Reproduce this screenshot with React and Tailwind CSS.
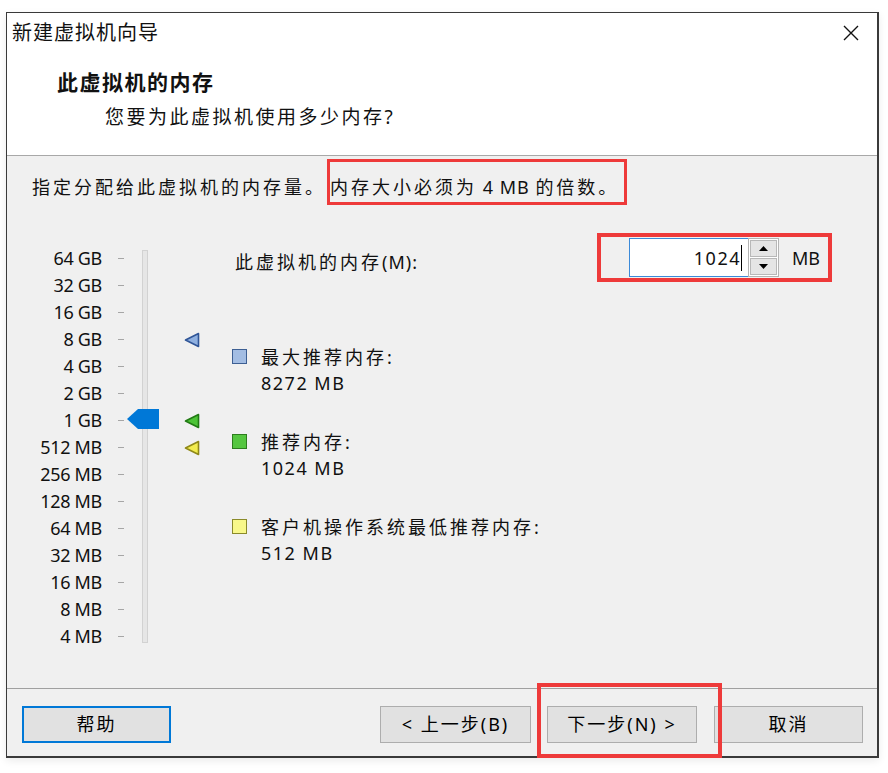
const scale = [
  "64 GB", "32 GB", "16 GB", "8 GB", "4 GB", "2 GB", "1 GB",
  "512 MB", "256 MB", "128 MB", "64 MB", "32 MB", "16 MB", "8 MB", "4 MB",
];

// markers next to the slider, keyed by row index
const markers = {
  3: { fill: "#8fb0e0", stroke: "#2f5597" },
  6: { fill: "#4cc436", stroke: "#217a14" },
  7: { fill: "#f2ec4e", stroke: "#8f8818" },
};

function Marker({ fill, stroke }) {
  return (
    <svg width="16" height="16" viewBox="0 0 16 16">
      <polygon points="1.5,8 14.5,1.5 14.5,14.5" fill={fill} stroke={stroke} strokeWidth="1.6" strokeLinejoin="round" />
    </svg>
  );
}

function LegendItem({ box, title, value }) {
  return (
    <div className="flex items-start">
      <div className={`mt-[5px] w-[15px] h-[15px] border ${box}`} />
      <div className="ml-[14px]">
        <div className="leading-[26px] tracking-[3px]">{title}</div>
        <div className="leading-[26px] tracking-[1.5px]">{value}</div>
      </div>
    </div>
  );
}

function Button({ children, className = "" }) {
  return (
    <button className={`h-[37px] bg-[#e1e1e1] flex items-center justify-center text-[18px] tracking-[2px] text-black ${className}`}>
      {children}
    </button>
  );
}

export default function App() {
  return (
    <div className="w-[888px] h-[773px] bg-white pt-[12px] pl-[6px] font-[family-name:'Noto_Sans','Noto_Sans_CJK_SC',sans-serif] text-[18px] text-[#111]">
      <div className="w-[873px] h-[746px] border-l border-t border-r-2 border-b-2 border-[#3a3a3a] flex flex-col shadow-[0_3px_8px_rgba(0,0,0,0.08)]">
        {/* header */}
        <div className="h-[143px] bg-white border-b border-[#a8a8a8]">
          <div className="h-[40px] flex items-center pl-[5px] pr-[18px]">
            <span className="text-[20px] tracking-[1px]">新建虚拟机向导</span>
            <svg className="ml-auto" width="16" height="16" viewBox="0 0 16 16">
              <path d="M1 1 L15 15 M15 1 L1 15" stroke="#111" strokeWidth="1.4" />
            </svg>
          </div>
          <div className="pl-[50px] mt-[15px] text-[21px] font-bold leading-[28px] tracking-[1.5px]">此虚拟机的内存</div>
          <div className="pl-[98px] mt-[8px] text-[19px] leading-[26px] tracking-[2.5px]">您要为此虚拟机使用多少内存?</div>
        </div>

        {/* body */}
        <div className="flex-1 bg-[#f0f0f0] flex flex-col">
          <div className="flex items-start pt-[3px] pl-[25px] tracking-[3px]">
            <span className="mt-[17px] leading-[22px]">指定分配给此虚拟机的内存量。</span>
            <span className="ml-[1px] w-[300px] h-[46px] border-[3px] border-[#ee3a3a] pt-[14px] leading-[22px] whitespace-nowrap">
              内存大小必须为<span className="tracking-[1px]"> 4 MB </span>的倍数。
            </span>
          </div>

          <div className="flex-1 flex">
            {/* slider */}
            <div className="w-[225px] pt-[40px]">
              <div className="relative">
                <div className="absolute left-[135px] top-[5px] w-[6px] h-[393px] bg-[#e6e6e6] border border-[#d2d2d2]" />
                <svg className="absolute left-[120px] top-[164px]" width="32" height="20" viewBox="0 0 32 20">
                  <polygon points="0,10 11,0 32,0 32,20 11,20" fill="#0078d7" />
                </svg>
                {scale.map((label, i) => (
                  <div key={label} className="h-[27px] flex items-center">
                    <span className="w-[95px] text-right tracking-[-0.3px] leading-[27px]">{label}</span>
                    <span className="ml-[16px] w-[6px] h-px bg-[#a6a6a6]" />
                    <span className="ml-[60px] w-[16px] h-[16px] flex">
                      {markers[i] && <Marker {...markers[i]} />}
                    </span>
                  </div>
                ))}
              </div>
            </div>

            {/* right column */}
            <div className="flex-1 pt-[28px]">
              <div className="flex items-start pr-[45px]">
                <span className="pl-[3px] mt-[18px] leading-[22px] tracking-[3px]">
                  此虚拟机的内存<span className="tracking-[1px]">(M):</span>
                </span>
                <div className="ml-auto w-[235px] h-[49px] border-4 border-[#ee3a3a] flex items-center pl-[28px]">
                  <div className="w-[119px] h-[39px] bg-white border border-r-0 border-[#3b8ad9] flex items-center justify-end pr-[6px]">
                    <span className="tracking-[1.5px] leading-[24px]">1024</span>
                    <span className="w-px h-[26px] bg-black" />
                  </div>
                  <div className="w-[31px] h-[39px] border border-[#b4b4b4] bg-white flex flex-col p-px gap-px">
                    <div className="flex-1 bg-[#e5e5e5] border border-[#b8b8b8] flex items-center justify-center">
                      <svg width="9" height="5" viewBox="0 0 9 5"><polygon points="4.5,0 9,5 0,5" fill="#000" /></svg>
                    </div>
                    <div className="flex-1 bg-[#e5e5e5] border border-[#b8b8b8] flex items-center justify-center">
                      <svg width="9" height="5" viewBox="0 0 9 5"><polygon points="0,0 9,0 4.5,5" fill="#000" /></svg>
                    </div>
                  </div>
                  <span className="ml-[13px] leading-[22px]">MB</span>
                </div>
              </div>

              <div className="mt-[62px] flex flex-col gap-[33px]">
                <LegendItem box="bg-[#a3bde3] border-[#3d5f93]" title="最大推荐内存:" value="8272 MB" />
                <LegendItem box="bg-[#55c640] border-[#2d7d1e]" title="推荐内存:" value="1024 MB" />
                <LegendItem box="bg-[#f8f88a] border-[#8a8a2a]" title="客户机操作系统最低推荐内存:" value="512 MB" />
              </div>
            </div>
          </div>
        </div>

        {/* footer */}
        <div className="h-[68px] bg-[#f0f0f0] border-t border-[#a0a0a0] flex items-start pt-[17px] pl-[15px] pr-[14px]">
          <Button className="w-[149px] border-2 border-[#0078d7]">帮助</Button>
          <Button className="ml-auto w-[151px] border border-[#adadad]">&lt; 上一步(B)</Button>
          <div className="relative ml-[16px]">
            <Button className="w-[150px] border border-[#adadad]">下一步(N) &gt;</Button>
            <div className="absolute left-[-10px] right-[-25px] top-[-23px] bottom-[-15px] border-4 border-[#ee3a3a] pointer-events-none" />
          </div>
          <Button className="ml-[17px] w-[149px] border border-[#adadad]">取消</Button>
        </div>
      </div>
    </div>
  );
}
